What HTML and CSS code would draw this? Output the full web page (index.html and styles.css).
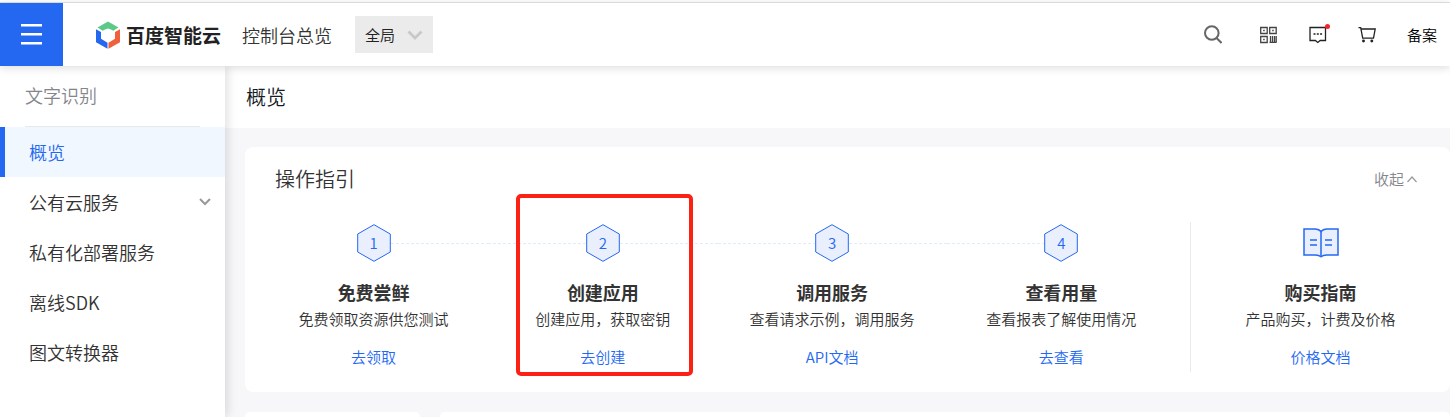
FILE: index.html
```html
<!DOCTYPE html>
<html lang="zh-CN">
<head>
<meta charset="utf-8">
<meta name="viewport" content="width=device-width, initial-scale=1">
<title>百度智能云 控制台</title>
<link rel="stylesheet" href="styles.css">
</head>
<body>
<div class="app">
  <header class="topbar">
    <button class="menu-btn" type="button" aria-label="菜单">
      <svg width="22" height="22" viewBox="0 0 22 22" fill="#fff"><path d="M0 0h21v2.500H0zM0 9h21v2.500H0zM0 18h21v2.500H0z"/></svg>
    </button>
    <a class="brand" href="#">
      <svg width="26" height="28" viewBox="0 0 26 28">
        <path fill="#5bca87" d="M2.500 6.400 13 .5l10.500 5.900-5.200 3.400-2.300-1.400-3-1-3 1-2.300 1.400z"/>
        <path fill="#2468f2" d="M1 8.300 6 11v6.800l6.500 4v6L1 21.300z"/>
        <path fill="#f0603c" d="M25 8.300v13l-11.500 6.500v-6l6.500-4V11z"/>
      </svg>
      <span class="brand-name">百度智能云</span>
    </a>
    <a class="console-link" href="#">控制台总览</a>
    <div class="region">
      <select class="region-select" aria-label="区域"><option>全局</option></select>
      <svg class="region-arrow" width="16" height="10" viewBox="0 0 16 10" fill="none" stroke="#c8c8c8" stroke-width="2.800"><path d="m1.500 1.500 6.500 6.500 6.500-6.500"/></svg>
    </div>
    <nav class="tools">
      <button class="tool tool-search" type="button" aria-label="搜索">
        <svg width="18" height="19" viewBox="0 0 18 19" fill="none" stroke="#666" stroke-width="2"><circle cx="7.800" cy="8" r="6.800"/><path d="m12.500 13 5 5"/></svg>
      </button>
      <button class="tool" type="button" aria-label="二维码">
        <svg width="18" height="18" viewBox="0 0 18 18" fill="none" stroke="#444" stroke-width="1.300"><path d="M.700 1.500h6.500v6H.700zM9.700 1.500h6.500v6H9.700zM.700 10.500h6.500v6H.700zM9.500 16.300h7M10.500 10v6.500M12.500 10v6.500M14.500 10v6.500M16.200 10v6.500"/><path d="M3.200 4.500h1.500M12.200 4.500h1.500M3.200 13.500h1.500"/></svg>
      </button>
      <button class="tool tool-message" type="button" aria-label="消息">
        <svg width="18" height="18" viewBox="0 0 18 18" fill="none" stroke="#222" stroke-width="1.300"><path d="M1 1.500h15.500v13h-5.300L8.800 16.500l-2.400-2H1z"/><path stroke-width="1.600" d="M4.500 8h2M7.800 8h2M11.100 8h2"/></svg>
        <span class="dot"></span>
      </button>
      <button class="tool" type="button" aria-label="购物车">
        <svg width="18" height="18" viewBox="0 0 18 18" fill="none" stroke="#222" stroke-width="1.300"><path d="M.500 1.600h2.200l2 10.500h10.800L17.200 3H3"/><circle cx="5.500" cy="15" r=".8" fill="#222"/><circle cx="13.800" cy="15" r=".8" fill="#222"/></svg>
      </button>
      <a class="record-link" href="#">备案</a>
    </nav>
  </header>

  <div class="body">
    <aside class="sidebar">
      <h2 class="side-title">文字识别</h2>
      <nav>
        <a class="side-item active" href="#">概览</a>
        <a class="side-item" href="#">公有云服务
          <svg width="12" height="8" viewBox="0 0 12 8" fill="none" stroke="#999" stroke-width="2"><path d="m1 1 5 5 5-5"/></svg>
        </a>
        <a class="side-item" href="#">私有化部署服务</a>
        <a class="side-item" href="#">离线SDK</a>
        <a class="side-item" href="#">图文转换器</a>
      </nav>
    </aside>

    <main class="main">
      <h1 class="page-title">概览</h1>
      <div class="content">
        <section class="card">
          <div class="card-head">
            <h2 class="card-title">操作指引</h2>
            <button class="collapse" type="button">收起
              <svg width="10" height="7" viewBox="0 0 10 7" fill="none" stroke="#999" stroke-width="1.200"><path d="m.5 6 4.500-5 4.500 5"/></svg>
            </button>
          </div>
          <div class="guide">
            <ol class="steps">
              <li class="step">
                <div class="marker"><span class="hex"><svg width="34" height="38" viewBox="0 0 34 38" fill="#e9effd" stroke="#2468f2"><path d="M17 .7 33.300 10v18L17 37.300.7 28V10z"/></svg><span class="num">1</span></span></div>
                <h3 class="step-title">免费尝鲜</h3><p class="step-desc">免费领取资源供您测试</p><a class="step-link" href="#">去领取</a>
              </li>
              <li class="step highlighted">
                <div class="marker"><span class="hex"><svg width="34" height="38" viewBox="0 0 34 38" fill="#e9effd" stroke="#2468f2"><path d="M17 .7 33.300 10v18L17 37.300.7 28V10z"/></svg><span class="num">2</span></span></div>
                <h3 class="step-title">创建应用</h3><p class="step-desc">创建应用，获取密钥</p><a class="step-link" href="#">去创建</a>
              </li>
              <li class="step">
                <div class="marker"><span class="hex"><svg width="34" height="38" viewBox="0 0 34 38" fill="#e9effd" stroke="#2468f2"><path d="M17 .7 33.300 10v18L17 37.300.7 28V10z"/></svg><span class="num">3</span></span></div>
                <h3 class="step-title">调用服务</h3><p class="step-desc">查看请求示例，调用服务</p><a class="step-link" href="#">API文档</a>
              </li>
              <li class="step">
                <div class="marker"><span class="hex"><svg width="34" height="38" viewBox="0 0 34 38" fill="#e9effd" stroke="#2468f2"><path d="M17 .7 33.300 10v18L17 37.300.7 28V10z"/></svg><span class="num">4</span></span></div>
                <h3 class="step-title">查看用量</h3><p class="step-desc">查看报表了解使用情况</p><a class="step-link" href="#">去查看</a>
              </li>
            </ol>
            <div class="step buying">
              <div class="book">
                <svg width="36" height="30" viewBox="0 0 36 30" fill="#e9effd" stroke="#2468f2" stroke-width="1.500"><path d="M1 1h11.500q3.500.2 5.500 2.500Q20 1.200 23.500 1H35v26H23.500q-3.500.1-5.500 1.800-2-1.700-5.500-1.800H1z"/><path d="M18 3.500v25M7 12h7M7 17h7M22 12h7M22 17h7"/></svg>
              </div>
              <h3 class="step-title">购买指南</h3><p class="step-desc">产品购买，计费及价格</p><a class="step-link" href="#">价格文档</a>
            </div>
          </div>
        </section>
        <div class="lower">
          <section class="panel panel-side"></section>
          <section class="panel panel-main"></section>
        </div>
      </div>
    </main>
  </div>
</div>
</body>
</html>
```
FILE: styles.css
```css
* { box-sizing: border-box; }
body {
  margin: 0;
  font: 15px/22px "Noto Sans CJK SC", "Liberation Sans", sans-serif;
  font-weight: 350;
  color: #333;
  background: #fff;
}
h1, h2, h3, p, ol { margin: 0; padding: 0; font-weight: inherit; }
a { color: inherit; text-decoration: none; }
button { border: 0; padding: 0; background: none; font: inherit; color: inherit; cursor: pointer; }
svg { display: block; flex: none; }

.app { display: flex; flex-direction: column; height: 100vh; padding-top: 2px; overflow: hidden; }
.topbar {
  position: relative;
  z-index: 2;
  flex: none;
  display: flex;
  align-items: center;
  border-top: 1px solid #d9dadb;
  background: #fff;
  box-shadow: 0 2px 8px rgba(7, 12, 20, .14);
}
.menu-btn { display: flex; align-items: center; justify-content: center; width: 63px; height: 63px; background: #2468f2; }
.brand { display: flex; align-items: center; gap: 5px; margin-left: 32px; color: #222; }
.brand-name { font-size: 19px; font-weight: 700; white-space: nowrap; }
.console-link { margin-left: 21px; font-size: 18px; white-space: nowrap; }
.region { position: relative; margin-left: 23px; }
.region-select {
  display: block;
  appearance: none;
  width: 78px;
  height: 37px;
  padding: 0 10px;
  border: 0;
  border-radius: 0;
  background: #ebebeb;
  color: #222;
  font: inherit;
}
.region-arrow { position: absolute; right: 10px; top: 14px; pointer-events: none; }
.tools { display: flex; align-items: center; gap: 31px; margin-left: auto; padding-right: 13px; color: #000; }
.tool { position: relative; }
.tool-search { margin-right: 7px; }
.dot { position: absolute; top: -2px; right: -3px; width: 5px; height: 5px; border-radius: 50%; background: #f5222d; }
.record-link { white-space: nowrap; }

.body { display: flex; flex: 1; min-height: 0; }
.sidebar { position: relative; z-index: 1; flex: none; width: 225px; background: #fff; box-shadow: 2px 0 10px rgba(7, 12, 20, .14); }
.side-title { margin: 0 25px; padding: 16px 0 18px; border-bottom: 1px solid #e8e9eb; font-size: 18px; line-height: 26px; color: #84868c; }
.side-item {
  display: flex;
  align-items: center;
  justify-content: space-between;
  height: 50px;
  padding: 0 14px 0 24px;
  border-left: 5px solid transparent;
  font-size: 18px;
}
.side-item.active { border-color: #2468f2; background: #f0f7ff; color: #2468f2; }

.main { display: flex; flex-direction: column; flex: 1; min-width: 0; background: #f7f7f9; }
.page-title { padding: 17px 21px; background: #fff; font-size: 20px; line-height: 28px; color: #151b26; }
.content { display: flex; flex-direction: column; flex: 1; gap: 20px; padding: 19px 0 0 20px; }
.card { padding-bottom: 20px; border-radius: 8px; background: #fff; }
.card-head { display: flex; align-items: center; justify-content: space-between; padding: 18px 33px 17px 30px; }
.card-title { font-size: 20px; line-height: 28px; }
.collapse { display: flex; align-items: center; gap: 3px; color: #84868c; }
.guide { display: flex; padding-top: 12px; }
.steps { display: grid; grid-template-columns: repeat(4, 1fr); flex: 1; padding: 0 14px; list-style: none; }
.step { position: relative; padding-top: 2px; text-align: center; }
.marker { display: flex; align-items: center; height: 38px; }
.marker::before, .marker::after {
  content: "";
  flex: 1;
  height: 1px;
  background: repeating-linear-gradient(90deg, #e0ebfd 0 3px, transparent 3px 5px);
}
.step:first-child .marker::before, .step:last-child .marker::after { visibility: hidden; }
.hex { display: grid; place-items: center; color: #2468f2; }
.hex > * { grid-area: 1 / 1; }
.step-title { margin-top: 17px; font-size: 18px; line-height: 26px; font-weight: 700; }
.step-desc { margin-top: 3px; line-height: 22px; }
.step-link { display: block; margin-top: 16px; line-height: 22px; color: #2468f2; }
.highlighted::after {
  content: "";
  position: absolute;
  inset: -28px 25px -4px 28px;
  border: 4px solid #fc2115;
  border-radius: 5px;
  pointer-events: none;
}
.buying { flex: none; width: 260px; padding-bottom: 4px; border-left: 1px solid #e8e9eb; }
.book { display: flex; align-items: center; justify-content: center; height: 38px; }
.lower { display: flex; flex: 1; gap: 20px; }
.panel { border-radius: 8px 8px 0 0; background: #fff; }
.panel-side { width: 175px; }
.panel-main { flex: 1; }
```
